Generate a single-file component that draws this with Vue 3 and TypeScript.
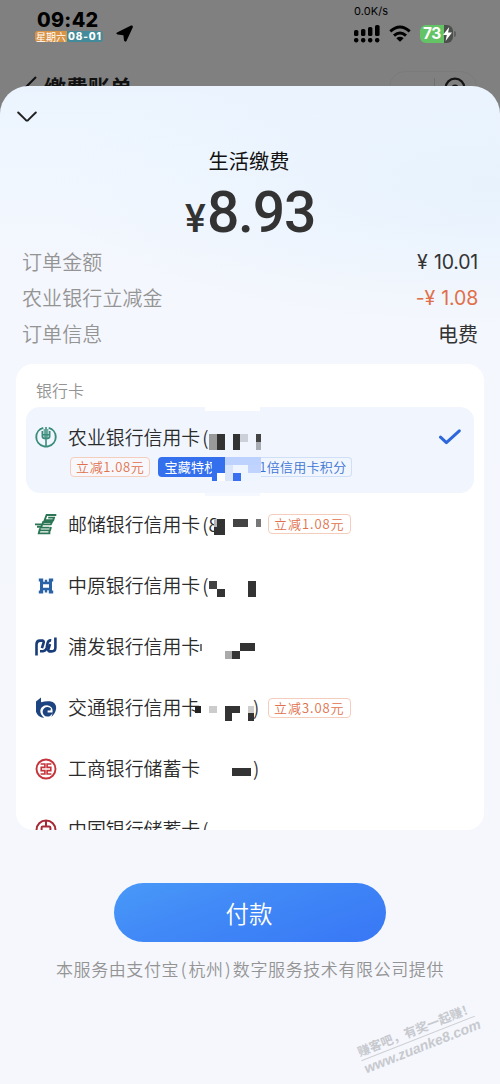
<script setup lang="ts">
type Block = [x: number, y: number, w: number, h: number, fill: string]

interface Bank {
  id: string
  name: string
  tail?: string
  tag?: string
  end?: boolean
  blocks: Block[]
}

const summary = [
  { label: '订单金额', value: '¥ 10.01', kind: 'money' },
  { label: '农业银行立减金', value: '-¥ 1.08', kind: 'money off' },
  { label: '订单信息', value: '电费', kind: '' },
]

const banks: Bank[] = [
  {
    id: 'psbc', name: '邮储银行信用卡', tail: '(8', tag: '立减1.08元',
    blocks: [
      [188, 26, 3, 8, '#b5b5b5'], [191, 26, 8, 16, '#333'], [188, 34, 4, 8, '#333'],
      [207, 26, 15, 8, '#444'], [230, 26, 5, 8, '#777'],
    ],
  },
  {
    id: 'zybank', name: '中原银行信用卡', tail: '(',
    blocks: [[183, 26, 8, 8, '#444'], [191, 34, 8, 8, '#333'], [222, 26, 8, 16, '#333']],
  },
  {
    id: 'spdb', name: '浦发银行信用卡',
    blocks: [[174, 28, 2, 7, '#777'], [199, 35, 7, 8, '#aaa'], [206, 35, 8, 8, '#333'], [214, 27, 15, 8, '#333']],
  },
  {
    id: 'bocom', name: '交通银行信用卡', tag: '立减3.08元', end: true,
    blocks: [
      [169, 29, 6, 7, '#222'], [183, 29, 8, 7, '#ccc'], [199, 29, 15, 7, '#333'],
      [199, 36, 7, 8, '#333'], [222, 29, 6, 7, '#ccc'], [222, 36, 6, 8, '#333'],
    ],
  },
  { id: 'icbc', name: '工商银行储蓄卡', end: true, blocks: [[206, 30, 19, 8, '#333']] },
  { id: 'boc', name: '中国银行储蓄卡', tail: '(', blocks: [] },
]

const abcBlocks: Block[] = [
  [179, 0, 55, 4, '#fff'], [179, 86, 55, 3, '#f5f8fe'],
  [183, 27, 8, 16, '#999'], [191, 27, 8, 16, '#333'], [207, 27, 7, 16, '#333'],
  [214, 27, 8, 8, '#ccd0d9'], [230, 27, 5, 8, '#444'], [230, 35, 5, 8, '#a9acb3'],
  [186, 50, 13, 24, '#3470ee'],
  [199, 50, 36, 8, '#bdd2ff'], [199, 58, 8, 16, '#dae5fc'], [207, 58, 15, 8, '#eff5fe'],
  [222, 58, 13, 8, '#c0d4ff'], [186, 70, 5, 4, '#3470ee'], [191, 66, 8, 8, '#fff'],
  [207, 66, 8, 8, '#3a6ff0'], [199, 74, 36, 4, '#f0f5fe'], [215, 66, 20, 8, '#eff5fe'],
]
</script>

<template>
  <main class="screen">
    <header class="status">
      <div class="clock">
        <div class="time">09:42</div>
        <div class="date"><span class="week">星期六</span><span class="day">08-01</span></div>
      </div>
      <svg class="arrow" width="18" height="18" viewBox="0 0 18 18">
        <path d="M1 7.6 15 .5Q17.4 0 16.7 2.4L10.6 15.7Q9.3 17.7 8 15.5L7.4 10.2 1.6 9.5Q-.5 8.8 1 7.6Z" />
      </svg>
      <div class="right">
        <div class="speed">0.0K/s</div>
        <div class="signals">
          <svg width="26" height="18" viewBox="0 0 26 18">
            <rect x="0" y="5" width="4.4" height="6" rx="1.6" /><rect x="7" y="4" width="4.4" height="7" rx="1.6" />
            <rect x="14" y="2" width="4.4" height="9" rx="1.6" /><rect x="21" y="0" width="4.6" height="11" rx="1.6" />
            <rect x="0" y="13" width="4.4" height="4.4" rx="1.8" /><rect x="7" y="13" width="4.4" height="4.4" rx="1.8" />
            <rect x="14" y="13" width="4.4" height="4.4" rx="1.8" /><rect x="21" y="13" width="4.4" height="4.4" rx="1.8" />
          </svg>
          <svg class="wifi" width="22" height="18" viewBox="0 0 22 18">
            <path d="M1.3 6.3Q11-2.2 20.7 6.3M5 10.6Q11 5.3 17 10.6" fill="none" stroke="#000" stroke-width="3" />
            <path d="M7.3 13.2Q11 10.4 14.7 13.2L11 16.8Z" />
          </svg>
          <div class="battery">
            <span>73</span>
            <svg width="9" height="14" viewBox="0 0 9 14"><path d="M6.2 0 0 8H3.8L2.6 14 9 5.6H5.1Z" fill="#fff" /></svg>
          </div>
          <i class="nub"></i>
        </div>
      </div>
    </header>

    <div class="nav">
      <svg width="12" height="22" viewBox="0 0 12 22"><path d="M11 1 1 11 11 21" fill="none" stroke="#111" stroke-width="2" /></svg>
      <span class="title">缴费账单</span>
      <div class="capsule">
        <i class="dots"></i>
        <i class="split"></i>
        <svg width="22" height="22" viewBox="0 0 22 22">
          <circle cx="11" cy="11" r="9.4" fill="none" stroke="#151515" stroke-width="2.2" /><circle cx="11" cy="11" r="3.6" fill="#151515" />
        </svg>
      </div>
    </div>

    <section class="sheet">
      <svg class="close" width="20" height="12" viewBox="0 0 20 12">
        <path d="M1.2 1.5 8.7 8.9Q10 10.1 11.3 8.9L18.8 1.5" fill="none" stroke="#222" stroke-width="2" stroke-linecap="round" />
      </svg>
      <h1>生活缴费</h1>
      <div class="amount"><span class="yen">¥</span><span class="num">8.93</span></div>

      <dl class="summary">
        <div v-for="row in summary" :key="row.label" class="line">
          <dt>{{ row.label }}</dt>
          <dd :class="row.kind">{{ row.value }}</dd>
        </div>
      </dl>

      <div class="card">
        <div class="group">银行卡</div>
        <div class="bank chosen">
          <svg class="logo" viewBox="0 0 22 22">
            <g fill="none" stroke="#3c8c7b">
              <path d="M8.3 1.9A9.4 9.4 0 0 0 8.3 20.1M13.7 1.9A9.4 9.4 0 0 1 13.7 20.1M8.3 20.1Q11 21 13.7 20.1" stroke-width="1.9" />
              <path d="M11 1V20M7.3 5V10.5Q7.3 12.6 11 12.8 14.7 12.6 14.7 10.5V5M7.3 8.7H14.7" stroke-width="1.6" />
              <path d="M9.2 3V12M12.8 3V12" stroke-width="1" />
            </g>
          </svg>
          <div class="info">
            <div class="name">农业银行信用卡<span class="tail">(</span></div>
            <div class="tags">
              <span class="tag">立减1.08元</span>
              <span class="perk"><b>宝藏特权</b><em>1倍信用卡积分</em></span>
            </div>
          </div>
          <svg class="check" width="22" height="16" viewBox="0 0 22 16">
            <path d="M1.5 8.2 7.4 13.6 20.3 1.8" fill="none" stroke="#2e67dc" stroke-width="3" stroke-linecap="round" stroke-linejoin="round" />
          </svg>
          <svg class="mosaic" shape-rendering="crispEdges">
            <rect v-for="(b, i) in abcBlocks" :key="i" :x="b[0]" :y="b[1]" :width="b[2]" :height="b[3]" :fill="b[4]" />
          </svg>
        </div>

        <div v-for="bank in banks" :key="bank.id" class="bank" :class="bank.id">
          <svg class="logo" viewBox="0 0 22 22">
            <g v-if="bank.id === 'psbc'" fill="none" stroke="#2c7656" stroke-width="1.9">
              <path d="M21.3 2H11.6L9.6 7.2H18.2L19 4.6H13.2M0 11.4H15.8L17 9H8.2L6 14.6H14.6M2 13.8H5.8M4.8 17.4H15L16 14M14.4 17V20.4H3.8L5 15.6" />
            </g>
            <g v-else-if="bank.id === 'zybank'" fill="#2a62a6">
              <path d="M3.8 3.6H8.2V6.8H9.8V4.8H12.2V6.8H13.8V3.6H18.2V6.6H17V15.6H18.2V18.4H13.8V15.2H12.2V17.4H9.8V15.2H8.2V18.4H3.8V15.6H5V6.6H3.8ZM8 9.2V12.8H14V9.2Z" fill-rule="evenodd" />
            </g>
            <g v-else-if="bank.id === 'spdb'" fill="none" stroke="#183c78" stroke-width="2.6">
              <path d="M1.5 19.5V8.5Q1.5 4.6 5 4.6H7.6Q9.4 5 8.4 7.5L6.9 12.2" />
              <path d="M5 15.2H8Q10.8 15 11.6 12L12.6 7Q13.4 4 16.2 4.4" />
              <path d="M20.4 1.5V11.5Q20.4 15.4 16.6 15.4H14.4Q12.6 15 13.6 12.5L15 8" />
            </g>
            <g v-else-if="bank.id === 'bocom'">
              <path d="M6 .4V5.2Q10.8 3.8 15 4.3 21.2 5.5 21.2 11 20.6 16.5 16.3 20 18.6 15 17 11 14.2 7 9.5 8.6 5.8 10.2 5.3 13.6 5 17.3 9.2 21 2.5 20 1 14.8V4.6Z" fill="#1d4380" />
              <path d="M16 11.6A4.8 4.8 0 1 0 15.6 18.4L18.4 15.4H12.6V13.4H15.4Z" fill="#1d4380" />
            </g>
            <g v-else-if="bank.id === 'icbc'" fill="none" stroke="#c5343b">
              <circle cx="11" cy="11" r="9.5" stroke-width="1.9" />
              <path d="M5.6 6H9.9V9.4H6.2V12.6H9.9V16H5.6M16.4 6H12.1V9.4H15.8V12.6H12.1V16H16.4" stroke-width="1.6" />
            </g>
            <g v-else fill="none" stroke="#a52a35" stroke-width="2">
              <circle cx="11" cy="11" r="9.5" /><path d="M11 1.5V7.5M11 14.5V20.5" /><rect x="6.6" y="7.5" width="8.8" height="7" rx="1.2" />
            </g>
          </svg>
          <div class="name">{{ bank.name }}<span v-if="bank.tail" class="tail">{{ bank.tail }}</span></div>
          <svg class="mosaic" shape-rendering="crispEdges">
            <rect v-for="(b, i) in bank.blocks" :key="i" :x="b[0]" :y="b[1]" :width="b[2]" :height="b[3]" :fill="b[4]" />
          </svg>
          <span class="end">{{ bank.end ? ')' : '' }}</span>
          <span v-if="bank.tag" class="tag">{{ bank.tag }}</span>
        </div>
      </div>

      <button class="pay">付款</button>
      <p class="note">本服务由支付宝<span class="paren">(</span>杭州<span class="paren">)</span>数字服务技术有限公司提供</p>
    </section>

    <div class="watermark">
      <div class="slogan">赚客吧，有奖一起赚！</div>
      <div class="site">www.zuanke8.com</div>
    </div>
  </main>
</template>

<style>
body { margin: 0; background: #808080; }
</style>

<style scoped>
.screen {
  position: relative; width: 500px; height: 1084px; overflow: hidden; background: #808080;
  display: flex; flex-direction: column; box-sizing: border-box;
  font-family: "Noto Sans CJK SC", sans-serif; font-weight: 350; color: #333;
}
.status { height: 70px; flex: none; display: flex; align-items: flex-start; color: #000; }
.clock { margin: 9px 0 0 35px; width: 68px; }
.time { font: 800 19.8px/22px Inter, sans-serif; padding-left: 2px; white-space: nowrap; letter-spacing: .3px; }
.date { display: flex; height: 11px; line-height: 11px; color: #fff; }
.week { width: 32px; background: #d99445; font-size: 10px; font-weight: 400; text-align: center; white-space: nowrap; border-radius: 3px 0 0 3px; }
.day { flex: 1; background: #438b9a; font: 800 10px/11px Inter, sans-serif; letter-spacing: .8px; padding-left: 1px; border-radius: 0 3px 3px 0; }
.arrow { margin: 25px 0 0 13px; }
.right { margin: 4px 0 0 220px; }
.speed { font: 400 11px/14px Inter, sans-serif; letter-spacing: .1px; }
.signals { display: flex; align-items: center; margin-top: 6px; height: 19px; }
.wifi { margin-left: 9px; }
.battery {
  margin-left: 9px; width: 33px; height: 18px; border-radius: 6px; display: flex; align-items: center; box-sizing: border-box;
  padding-left: 3px; background: linear-gradient(90deg, #63c365 72%, #4c504c 72%);
  font: 700 15.5px/18px Inter, sans-serif; color: #fff;
}
.battery span { width: 20px; letter-spacing: -.5px; }
.nub { width: 2px; height: 6px; background: #5f5f5f; border-radius: 0 3px 3px 0; margin-left: 1px; }

.nav { height: 16px; flex: none; display: flex; align-items: flex-start; }
.nav > svg { margin: 6px 0 0 25px; flex: none; }
.title { margin-left: 7px; font-weight: 700; font-size: 22px; line-height: 34px; color: #111; white-space: nowrap; margin-top: -1px; }
.capsule {
  margin: 1px 0 0 auto; width: 88px; height: 32px; border: 1px solid #7b7b7b; border-radius: 17px; margin-right: 23px;
  display: flex; box-sizing: border-box; flex: none;
}
.dots { width: 44px; }
.split { width: 1px; height: 20px; margin-top: 6px; background: #707070; }
.capsule svg { margin: 5px 0 0 9px; }

.sheet {
  position: relative; flex: 1; display: flex; flex-direction: column; border-radius: 28px 28px 0 0;
  background: radial-gradient(ellipse 450px 140px at 100% 10%, #e7f2fd, rgba(231, 242, 253, 0)), linear-gradient(180deg, #ebf4fe 0, #f1f7ff 100px, #f4f7fd 190px, #f5f7fc 100%);
}
.close { margin: 25px 0 0 17px; flex: none; }
h1 { margin: 23px 0 0; font-size: 20.2px; font-weight: 400; line-height: 30px; text-align: center; color: #111; padding-right: 2px; }
.amount { display: flex; justify-content: center; align-items: baseline; height: 65px; padding-top: 3px; line-height: 68px; font-family: Roboto, sans-serif; font-weight: 500; color: #333; }
.yen { font-size: 39px; margin-right: 1px; width: 21px; display: inline-block; }
.num { font-size: 57px; letter-spacing: -1.2px; }
.summary { margin: 0; padding: 0 22px; height: 120px; }
.line { display: flex; justify-content: space-between; height: 36px; line-height: 36px; }
dt { font-size: 20px; letter-spacing: .1px; color: #949494; }
dd { margin: 0; font-size: 20px; font-weight: 400; color: #333; }
.money { font-family: Inter, sans-serif; font-size: 19.5px; letter-spacing: -.2px; word-spacing: 1px; }
.off { color: #e0704a; }

.card { position: relative; margin: 0 16px; height: 466px; flex: none; border-radius: 17px; background: #fff; overflow: hidden; padding: 0 10px; box-sizing: border-box; }
.group { height: 43px; line-height: 52px; font-size: 16px; color: #949494; padding-left: 10px; }
.bank { position: relative; display: flex; align-items: center; height: 61px; }
.psbc { height: 62px; }
.chosen { height: 86px; background: #f0f5fe; border-radius: 14px; align-items: flex-start; }
.logo { width: 22px; height: 22px; margin: 0 11px 0 9px; flex: none; }
.chosen .logo { margin-top: 19px; }
.name { font-size: 18.9px; line-height: 28px; font-weight: 350; color: #2b2b2b; white-space: nowrap; width: 160px; margin-top: -1px; }
.chosen .name { margin-top: 16px; }
.tail { margin-left: 2px; }
.tags { display: flex; gap: 8px; margin: 6px 0 0 2px; }
.tag {
  position: relative; box-sizing: border-box; height: 20px; line-height: 18px; padding: 0 5px; border: 1px solid #f4cdbd; border-radius: 4px;
  font-size: 13px; font-weight: 350; letter-spacing: .95px; color: #e0704a; white-space: nowrap; background: #fff;
}
.chosen .tag { background: #f8f8fc; letter-spacing: .65px; }
.perk { display: flex; height: 20px; line-height: 20px; font-size: 13px; font-weight: 350; width: 194px; white-space: nowrap; box-sizing: border-box; }
.perk b { width: 66px; padding-left: 6px; box-sizing: border-box; font-weight: 400; background: #3470ee; color: #fff; border-radius: 4px 0 0 4px; letter-spacing: .3px; }
.perk em { flex: 1; font-style: normal; text-align: right; padding-right: 5px; line-height: 18px; color: #3c73d3; border: 1px solid #cfdff8; border-left: 0; border-radius: 0 4px 4px 0; letter-spacing: .3px; }
.check { position: absolute; right: 13px; top: 22px; }
.mosaic { position: absolute; left: 0; top: 0; width: 100%; height: 100%; overflow: visible; }
.end { position: relative; width: 15px; margin-left: 25px; font-size: 19px; line-height: 28px; margin-top: -2px; }

.pay {
  align-self: center; margin-top: 53px; width: 272px; height: 59px; flex: none; border: 0; border-radius: 30px; color: #fff;
  background: linear-gradient(160deg, #4899f8 0, #4189f7 40%, #3877f5 100%); font: 350 23.5px/58px "Noto Sans CJK SC", sans-serif; padding: 0 2px 0 0;
}
.note { margin: 13px 0 0; text-align: center; font-size: 17px; line-height: 28px; letter-spacing: .6px; color: #949494; white-space: nowrap; }
.paren { margin: 0 1.5px; }

.watermark { position: absolute; left: 357px; top: 1021px; width: 122px; transform: rotate(-21.5deg); color: #c7c9ce; white-space: nowrap; }
.slogan { font-size: 12.4px; font-weight: 700; line-height: 17px; border-bottom: 1px solid #cdcfd3; }
.site { font: italic 700 14px/16px "Liberation Sans", sans-serif; padding-left: 0; }
</style>
